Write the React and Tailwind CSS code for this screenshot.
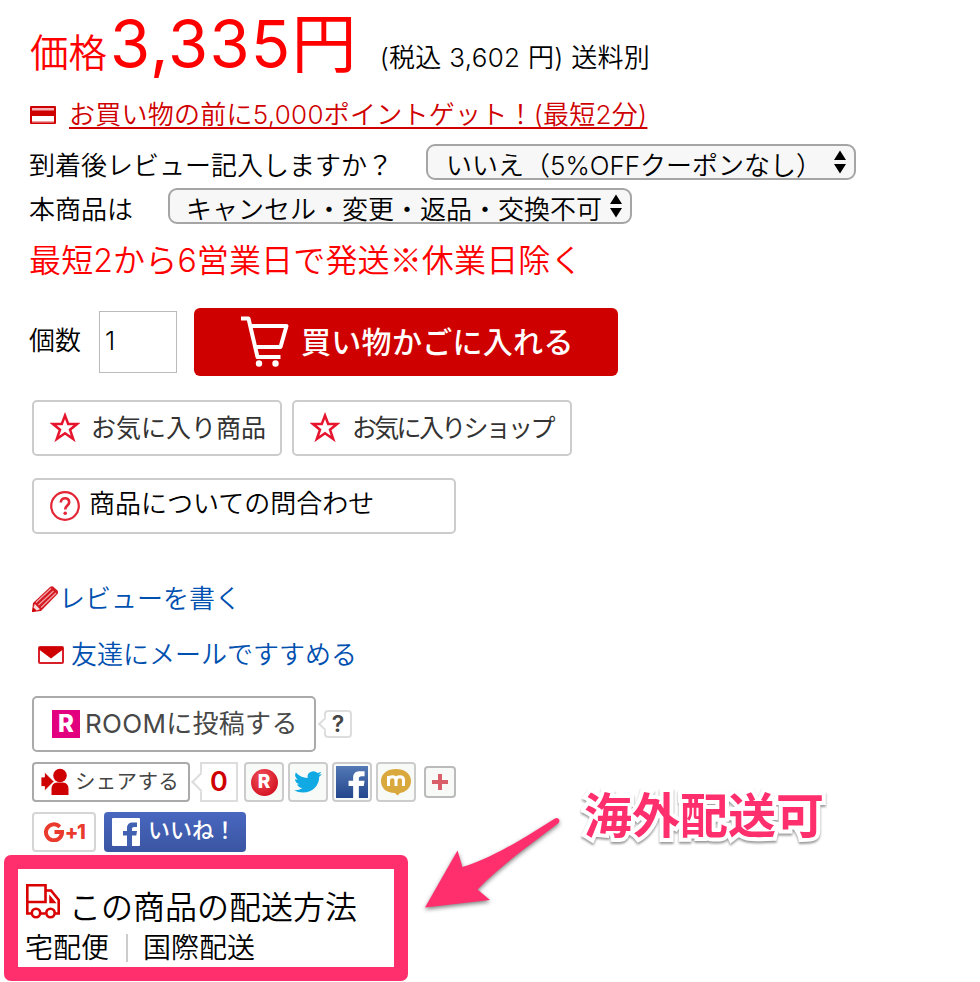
import React from 'react';

const SelectBox = ({ className, children }) => (
    <div className={`flex h-9 items-center justify-between rounded-[9px] border-2 border-[#a5a5a5] bg-[#f7f7f7] pr-2 ${className}`}>
        <span className="mt-2 leading-[24px] whitespace-nowrap">{children}</span>
        <svg width="12" height="24" viewBox="0 0 12 24" className="shrink-0">
            <path d="M6 0.5 L12 10 H0 Z M6 23.5 L12 14 H0 Z" fill="#000" />
        </svg>
    </div>
);

const CardIcon = () => (
    <svg width="26" height="18" viewBox="0 0 26 18">
        <rect width="26" height="18" rx="1" fill="#cf0000" />
        <rect x="2" y="2" width="22" height="2.5" fill="#f6b5b8" />
        <rect x="2" y="10" width="22" height="6" fill="#fff" />
        <rect x="2" y="15" width="22" height="1.5" fill="#f3a0a5" />
    </svg>
);

const CartIcon = () => (
    <svg width="48" height="51" viewBox="0 0 48 51" className="-mt-0.5" fill="none" stroke="#fff" strokeWidth="4" strokeLinejoin="round">
        <path d="M0 2.5 H7.5 L16.5 41 H39.5" />
        <path d="M10 10 H45.5 L39.5 31 H15" />
        <circle cx="18" cy="47.5" r="3.2" fill="#fff" stroke="none" />
        <circle cx="34.5" cy="47.5" r="3.2" fill="#fff" stroke="none" />
    </svg>
);

const StarIcon = () => (
    <svg width="30" height="30" viewBox="0 0 30 30" className="-mt-0.5" fill="none" stroke="#e6142d" strokeWidth="2.5">
        <path d="M15 3.5 L18.2 12 H27 L20 17.7 L23.2 27 L15 21.3 L6.8 27 L10 17.7 L3 12 H11.8 Z" />
    </svg>
);

const HelpIcon = () => (
    <svg width="30" height="30" viewBox="0 0 30 30" fill="none" stroke="#e32636">
        <circle cx="15" cy="15" r="13.8" strokeWidth="2.2" />
        <path d="M10.8 11.5 C11 5.8 19.4 6 19.2 11.4 C19.1 14.5 15.2 14.6 15.2 18.6" strokeWidth="2.6" />
        <circle cx="15.2" cy="22.3" r="1.8" fill="#e32636" stroke="none" />
    </svg>
);

const PencilIcon = () => (
    <svg width="26" height="26" viewBox="0 0 26 26">
        <path d="M0 26 L1 17 L18 1 Q19.5 0 21 0.5 L25.5 4.5 Q26.5 6.5 25.5 8 L9 25 Z" fill="#d41820" />
        <path d="M4 16.5 L19 2.5 M6.5 19 L21.5 5 M9 21.5 L24 7" stroke="#f0a0a4" strokeWidth="1.3" />
        <path d="M2.8 18 L8 23.2 L4.5 24.5 L1.5 21.5 Z" fill="#fbdcdc" />
        <path d="M0 26 L1 21.5 L4.5 25 Z" fill="#c00" />
    </svg>
);

const MailIcon = () => (
    <svg width="26" height="18" viewBox="0 0 26 18">
        <rect x="1" y="1" width="24" height="16" rx="1" fill="#fff" stroke="#d9202a" strokeWidth="2" />
        <path d="M1 1 H25 V3.5 L13 12.5 L1 3.5 Z" fill="#cf0000" />
    </svg>
);

const ShareIcon = () => (
    <svg width="28" height="28" viewBox="0 0 28 28" fill="#cf0000">
        <circle cx="19" cy="7.5" r="6.8" />
        <path d="M10.5 27 V21 Q10.5 15 16 14.5 H22 Q27.5 15 27.5 21 V27 Z" />
        <path d="M0 9 H3.5 V4 L13 13.5 L3.5 23 V18.5 H0 Z" stroke="#fff" strokeWidth="0.8" />
    </svg>
);

const RakutenIcon = () => (
    <div className="flex h-[27px] w-[27px] items-center justify-center rounded-full bg-radial-[at_40%_30%] from-[#f0505a] to-[#cc0010] text-[19px] font-extrabold text-white">
        R
    </div>
);

const TwitterIcon = () => (
    <svg width="28" height="26" viewBox="0 0 24 24" preserveAspectRatio="none" fill="#10a9e4">
        <path d="M23.95 4.57a10 10 0 0 1-2.82.77 4.96 4.96 0 0 0 2.16-2.72c-.95.55-2 .95-3.13 1.18a4.92 4.92 0 0 0-8.38 4.48C7.69 8.09 4.07 6.13 1.64 3.16a4.92 4.92 0 0 0 1.52 6.57 4.9 4.9 0 0 1-2.23-.61v.06a4.92 4.92 0 0 0 3.95 4.83 5 5 0 0 1-2.21.08 4.94 4.94 0 0 0 4.6 3.42A9.87 9.87 0 0 1 0 19.54a14 14 0 0 0 7.55 2.21c9.05 0 14-7.5 14-13.98 0-.21 0-.42-.02-.63a9.94 9.94 0 0 0 2.42-2.57z" />
    </svg>
);

const FacebookMark = ({ size, className }) => (
    <svg width={size} height={size} viewBox="0 0 28 28" className={className}>
        <path d="M15 28 V17.5 H11 V13 H15 V10 C15 6.3 17.5 4.5 20.5 4.5 H25 V9 H22.5 C20.5 9 20 9.8 20 11 V13 H25 L24.3 17.5 H20 V28 Z" fill="currentColor" />
    </svg>
);

const MixiIcon = () => (
    <svg width="32" height="28" viewBox="0 0 32 28">
        <path d="M16 1 C24.5 1 31 5.5 31 13 C31 20 26 24 20 25 L17.5 27.5 L15 25 C6 25 1 20 1 13 C1 5.5 7.5 1 16 1 Z" fill="#d9a93d" />
        <path d="M8.5 18 V8 M8.5 12 C9 7.8 16 7.8 16 12 V18 M16 12 C16.5 7.8 23.5 7.8 23.5 12 V18" fill="none" stroke="#fff" strokeWidth="3" />
    </svg>
);

const TruckIcon = () => (
    <svg width="34" height="35" viewBox="0 0 34 35" fill="none" stroke="#d80000" strokeWidth="2.6">
        <path d="M5 29.5 H1.3 V1.3 H19.5 V18 H1.3" />
        <path d="M19.5 6.5 H25 L32.7 16 V29.5 H29.5 M14.5 29.5 H19.5" />
        <path d="M24 12.5 V18.5 H29 Z" fill="#d80000" strokeWidth="1.5" />
        <circle cx="10" cy="29" r="4.2" />
        <circle cx="24.5" cy="29" r="4.2" />
    </svg>
);

const socials = [
    { name: 'rakuten', icon: <RakutenIcon /> },
    { name: 'twitter', icon: <TwitterIcon /> },
    {
        name: 'facebook',
        icon: (
            <div className="h-8 w-8 overflow-hidden bg-linear-to-b from-[#5479b5] to-[#24468c] text-white">
                <FacebookMark size={32} />
            </div>
        ),
    },
    { name: 'mixi', icon: <MixiIcon /> },
];

const App = () => {
    return (
        <div className="relative h-[982px] w-[980px] overflow-hidden bg-white font-['Inter','Noto_Sans_CJK_JP',sans-serif] text-[26px] leading-9 font-[350] text-black">
            <div className="flex h-[88px] items-baseline pl-[30px] leading-[88px] whitespace-nowrap text-[#ff0000]">
                <span className="text-[38.5px]">価格</span>
                <span className="ml-[3px] text-[65px] font-normal tracking-[1.2px]">3,335円</span>
                <span className="ml-[22px] tracking-[0.3px] text-black">(税込 3,602 円) 送料別</span>
            </div>

            <div className="flex h-[54px] items-center pl-[30px] text-[#cf0000]">
                <CardIcon />
                <a className="ml-[13px] whitespace-nowrap tracking-[0.26px] underline decoration-2 underline-offset-[3px] [text-decoration-skip-ink:none]">
                    お買い物の前に5,000ポイントゲット！(最短2分)
                </a>
            </div>

            <div className="mt-0.5 flex flex-col gap-2 pl-[30px]">
                <div className="flex h-9">
                    <span className="mt-1 -ml-px w-[397px]">到着後レビュー記入しますか？</span>
                    <SelectBox className="w-[430px] pl-[18px]">いいえ（5%OFFクーポンなし）</SelectBox>
                </div>
                <div className="flex h-9">
                    <span className="mt-1 -ml-px w-[139px]">本商品は</span>
                    <SelectBox className="w-[464px] pl-4">キャンセル・変更・返品・交換不可</SelectBox>
                </div>
            </div>

            <p className="h-[84px] pl-[29px] text-[32px] leading-[68px] tracking-[0.15px] text-[#ff0000]">
                最短2から6営業日で発送<span className="font-['Noto_Sans_CJK_JP']">※</span>休業日除く
            </p>

            <div className="flex h-[68px] items-center pl-[29px]">
                <span className="w-[70px] pb-0.5">個数</span>
                <div className="mb-px h-[62px] w-[78px] border border-[#bbb] pl-[5px] leading-[58px]">1</div>
                <button className="ml-[17px] flex h-[68px] w-[424px] items-center rounded-md bg-[#cf0000] pl-[47px] text-[30px] font-medium text-white">
                    <CartIcon />
                    <span className="ml-3 tracking-[0.3px] whitespace-nowrap">買い物かごに入れる</span>
                </button>
            </div>

            <div className="mt-6 flex gap-2.5 pl-8 text-[25px] font-normal text-[#333]">
                <div className="flex h-14 w-[250px] items-center rounded-[5px] border-2 border-[#ccc] pl-4 whitespace-nowrap">
                    <StarIcon />
                    <span className="ml-[11px]">お気に入り商品</span>
                </div>
                <div className="flex h-14 w-[280px] items-center rounded-[5px] border-2 border-[#ccc] pl-4 whitespace-nowrap">
                    <StarIcon />
                    <span className="ml-3 tracking-[-2.7px]">お気に入りショップ</span>
                </div>
            </div>

            <div className="mt-[22px] ml-8 flex h-14 w-[424px] items-center rounded-[5px] border-2 border-[#ccc] pl-4">
                <HelpIcon />
                <span className="mb-1 ml-[9px]">商品についての問合わせ</span>
            </div>

            <div className="mt-[47px] flex h-9 items-center pl-8 text-[#0050b0]">
                <PencilIcon />
                <span className="ml-px">レビューを書く</span>
            </div>
            <div className="mt-5 flex h-9 items-center pl-[38px] text-[#0050b0]">
                <MailIcon />
                <span className="ml-[7px]">友達にメールですすめる</span>
            </div>

            <div className="mt-[23px] flex items-center pl-8">
                <div className="flex h-14 w-[284px] items-center rounded-[5px] border-2 border-[#aaa] pl-[18px] font-normal text-[#484848]">
                    <div className="flex h-7 w-7 items-center justify-center bg-[#e3007f] text-[24px] font-extrabold text-white">R</div>
                    <span className="ml-[5px] whitespace-nowrap tracking-[0.3px]">ROOMに投稿する</span>
                </div>
                <div className="relative ml-2 flex h-7 w-7 items-center justify-center rounded border-2 border-[#ddd] text-[23px] font-semibold text-[#444]">
                    ?
                    <span className="absolute -left-[6px] h-2.5 w-2.5 rotate-45 border-b-2 border-l-2 border-[#ddd] bg-white" />
                </div>
            </div>

            <div className="mt-2.5 flex h-10 items-center pl-8">
                <div className="flex h-10 w-[158px] items-center rounded border-2 border-[#aaa] pl-[7px] text-[20.5px] font-normal text-[#444]">
                    <ShareIcon />
                    <span className="ml-1.5 tracking-[0.3px] whitespace-nowrap">シェアする</span>
                </div>
                <div className="relative ml-[10px] flex h-10 w-[38px] items-center justify-center border-2 border-[#ddd] text-[27px] font-semibold text-[#cf0000]">
                    0
                    <span className="absolute -left-[8px] h-3.5 w-3.5 rotate-45 border-b-2 border-l-2 border-[#ddd] bg-white" />
                </div>
                <div className="ml-1.5 flex gap-1">
                    {socials.map((s) => (
                        <div key={s.name} className="flex h-10 w-10 items-center justify-center rounded border-2 border-[#ccc] bg-[#f8faf8]">
                            {s.icon}
                        </div>
                    ))}
                </div>
                <div className="ml-2 flex h-8 w-8 items-center justify-center rounded border-2 border-[#bbb] bg-[#f8faf8]">
                    <svg width="16" height="16" viewBox="0 0 16 16">
                        <path d="M8 0 V16 M0 8 H16" stroke="#d9606a" strokeWidth="4" />
                    </svg>
                </div>
            </div>

            <div className="mt-2.5 flex h-10 gap-2 pl-8">
                <div className="flex w-16 items-center justify-center rounded border-2 border-[#d5d5d5] text-[#ea3a2d]">
                    <svg width="20" height="20" viewBox="0 0 20 20" fill="none" stroke="#ea3a2d" strokeWidth="4">
                        <path d="M15.8 4.8 A8 8 0 1 0 18 10 H10.5" />
                    </svg>
                    <span className="ml-px text-[20px] font-extrabold tracking-[-1.5px]">+1</span>
                </div>
                <div className="flex w-[142px] items-center rounded bg-linear-to-b from-[#4867bf] to-[#3a55a2] pl-2 text-[22px] font-medium text-white">
                    <div className="h-7 w-7 rounded-[1px] bg-white text-[#4060b2]">
                        <FacebookMark size={28} />
                    </div>
                    <span className="mb-1 ml-2 whitespace-nowrap">いいね！</span>
                </div>
            </div>

            <div className="mt-[3px] ml-1 h-[126px] w-[404px] rounded-[7px] border-[14px] border-[#ff2f6e] bg-white pl-2">
                <div className="flex h-16 items-center text-[32px]">
                    <TruckIcon />
                    <span className="mt-3.5 ml-[9px] whitespace-nowrap">この商品の配送方法</span>
                </div>
                <div className="-ml-px flex h-[30px] items-center text-[28px]">
                    <span>宅配便</span>
                    <span className="mr-[15px] ml-[17px] h-7 w-0.5 bg-[#ccc]" />
                    <span>国際配送</span>
                </div>
            </div>

            <svg width="145" height="100" viewBox="0 0 145 100" className="absolute top-[815px] left-[420px] drop-shadow-[0_2px_2px_rgba(0,0,0,0.5)]">
                <path d="M5 92.5 L37.5 35.5 L42.5 52 C70 44 103 24 135 3.5 C138 1.5 141 5.5 138.5 8 C113 28 82 49 57.5 74.5 L70 85 Z" fill="#ff2f6e" />
            </svg>
            <div className="absolute top-[786px] left-[584px] text-[48px] leading-[60px] font-bold whitespace-nowrap text-[#ff2f6e] drop-shadow-[0_2px_1px_rgba(0,0,0,0.4)] [-webkit-text-stroke:8px_white] [paint-order:stroke_fill]">
                海外配送可
            </div>
        </div>
    );
};

export default App;
